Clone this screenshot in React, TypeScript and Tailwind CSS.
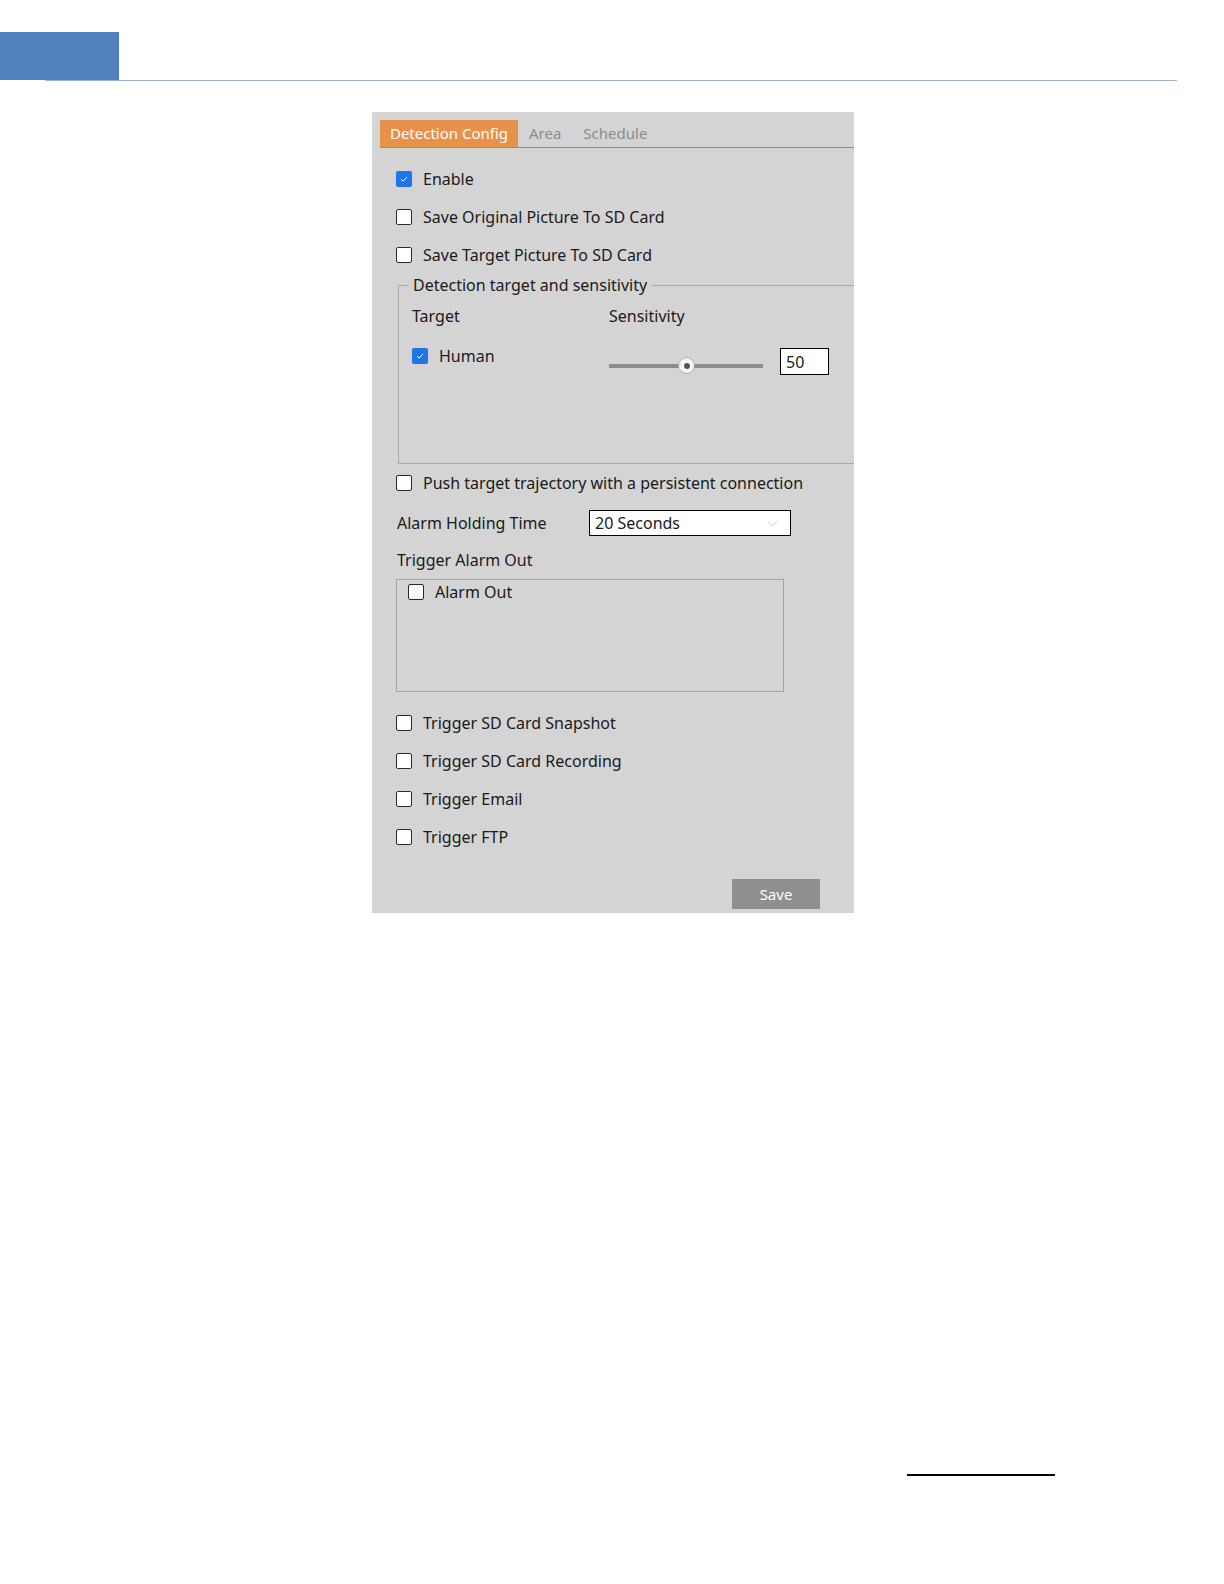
import React from "react";

const font = { fontFamily: '"Noto Sans", "Open Sans", sans-serif' };
const txt = "text-[16px] text-[#1a1a1a] leading-[22px]";

function Box({ checked = false }: { checked?: boolean }) {
  return checked ? (
    <span className="flex h-[16px] w-[16px] shrink-0 items-center justify-center rounded-[2px] bg-[#1f74ea]">
      <svg viewBox="0 0 12 12" className="h-[10px] w-[10px]">
        <path d="M2.5 6.3 L5 8.6 L9.6 3.4" fill="none" stroke="white" strokeWidth="1.2" />
      </svg>
    </span>
  ) : (
    <span className="h-[16px] w-[16px] shrink-0 rounded-[2px] border-[1.5px] border-[#2b2b2b] bg-white" />
  );
}

function CheckRow({ label, checked = false }: { label: string; checked?: boolean }) {
  return (
    <div className="flex h-[38px] items-center gap-[11px]">
      <Box checked={checked} />
      <span className={txt}>{label}</span>
    </div>
  );
}

export default function App() {
  return (
    <div className="min-h-[1584px] bg-white" style={font}>
      {/* header band */}
      <div className="ml-[45px] mt-[32px] h-[49px] w-[1132px] border-b border-[#a3b4d3]">
        <div className="-ml-[45px] h-[48px] w-[119px] bg-[#4f81bd]" />
      </div>

      {/* settings panel */}
      <div className="ml-[372px] mt-[31px] h-[801px] w-[482px] overflow-hidden bg-[#d4d4d4]">
        <div className="ml-[8px] mt-[8px] flex h-[28px] items-stretch border-b border-[#8f8f8f]">
          <div className="flex w-[138px] items-center justify-center bg-[#e8914a] text-[15px] text-white">Detection Config</div>
          <div className="ml-[11px] flex items-center text-[15px] text-[#8c8c8c]">Area</div>
          <div className="ml-[22px] flex items-center text-[15px] text-[#8c8c8c]">Schedule</div>
        </div>

        <div className="pl-[24px] pt-[12px]">
          <CheckRow label="Enable" checked />
          <CheckRow label="Save Original Picture To SD Card" />
          <CheckRow label="Save Target Picture To SD Card" />

          <fieldset className="ml-[2px] h-[190px] w-[480px] border border-[#a9a9a9] pl-[13px]">
            <legend className={`-ml-[3px] px-[4px] ${txt}`}>Detection target and sensitivity</legend>
            <div className="mt-[9px] flex">
              <span className={`w-[197px] ${txt}`}>Target</span>
              <span className={txt}>Sensitivity</span>
            </div>
            <div className="mt-[18px] flex items-start">
              <div className="flex h-[22px] w-[197px] items-center gap-[11px]">
                <Box checked />
                <span className={txt}>Human</span>
              </div>
              <div className="relative mt-[12px] flex h-[18px] w-[154px] items-center">
                <div className="h-[4px] w-full bg-[#8c8c8c]" />
                <div className="absolute left-[69px] top-0 flex h-[17px] w-[17px] items-center justify-center rounded-full border border-[#b5b5b5] bg-[radial-gradient(circle,#ffffff_30%,#e2e2e2_100%)]">
                  <div className="h-[6px] w-[6px] rounded-full bg-[#555]" />
                </div>
              </div>
              <div className="ml-[17px] mt-[3px] flex h-[27px] w-[49px] items-center border border-black bg-white pl-[5px] text-[16px] text-[#1a1a1a]">
                50
              </div>
            </div>
          </fieldset>

          <CheckRow label="Push target trajectory with a persistent connection" />

          <div className="mt-[8px] flex h-[26px] items-center">
            <span className={`w-[193px] pl-[1px] ${txt}`}>Alarm Holding Time</span>
            <div className="flex h-[26px] w-[202px] items-center justify-between border border-black bg-white pl-[5px] pr-[12px]">
              <span className="text-[16px] text-[#1a1a1a]">20 Seconds</span>
              <svg viewBox="0 0 12 6" className="h-[5px] w-[11px]">
                <path d="M0.5 0.5 L6 5.5 L11.5 0.5" fill="none" stroke="#bdbdbd" strokeWidth="1" />
              </svg>
            </div>
          </div>

          <div className={`mt-[13px] pl-[1px] ${txt}`}>Trigger Alarm Out</div>

          <div className="mt-[8px] h-[113px] w-[388px] border border-[#a3a3a3] pl-[11px] pt-[1px]">
            <div className="flex h-[22px] items-center gap-[11px]">
              <Box />
              <span className={txt}>Alarm Out</span>
            </div>
          </div>

          <div className="mt-[12px]">
            <CheckRow label="Trigger SD Card Snapshot" />
            <CheckRow label="Trigger SD Card Recording" />
            <CheckRow label="Trigger Email" />
            <CheckRow label="Trigger FTP" />
          </div>
        </div>

        <div className="mt-[23px] flex justify-end pr-[34px]">
          <button className="h-[30px] w-[88px] bg-[#8f8f8f] text-[15px] text-white">Save</button>
        </div>
      </div>

      {/* footer rule */}
      <div className="ml-[907px] mt-[561px] h-[2px] w-[148px] bg-black" />
    </div>
  );
}
